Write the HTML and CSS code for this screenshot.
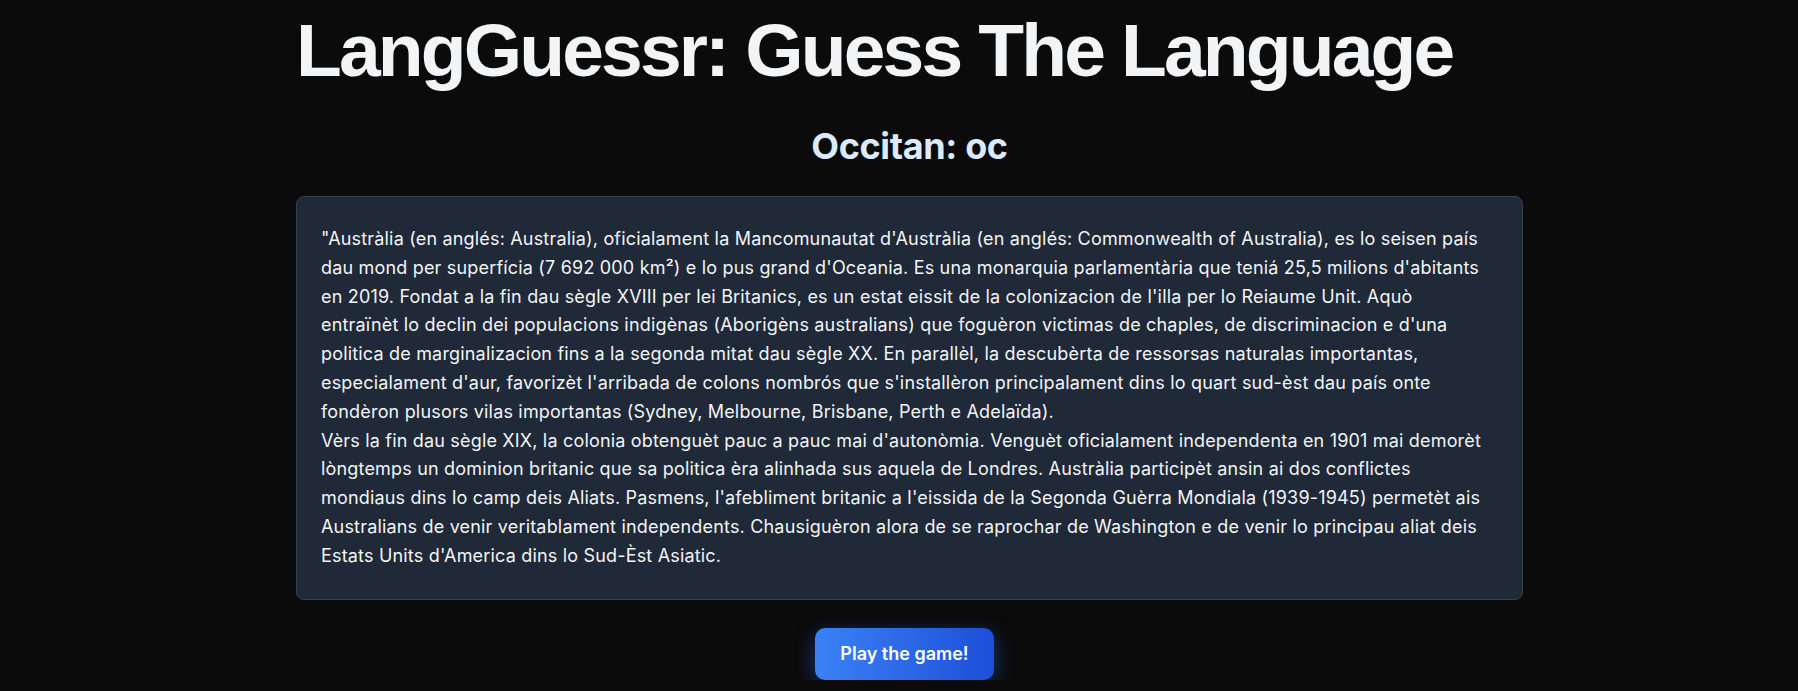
FILE: index.html
```html
<!DOCTYPE html>
<html lang="oc">
<head>
<meta charset="utf-8">
<title>LangGuessr</title>
<link rel="stylesheet" href="styles.css">
</head>
<body>
<main class="page">
  <h1 class="title">LangGuessr: Guess The Language</h1>
  <h2 class="lang">Occitan: oc</h2>
  <section class="card">
    <p class="text">"Austràlia (en anglés: Australia), oficialament la Mancomunautat d'Austràlia (en anglés: Commonwealth of Australia), es lo seisen país dau mond per superfícia (7 692 000 km²) e lo pus grand d'Oceania. Es una monarquia parlamentària que teniá 25,5 milions d'abitants en 2019. Fondat a la fin dau sègle XVIII per lei Britanics, es un estat eissit de la colonizacion de l'illa per lo Reiaume Unit. Aquò<br>entraïnèt lo declin dei populacions indigènas (Aborigèns australians) que foguèron victimas de chaples, de discriminacion e d'una<br>politica de marginalizacion fins a la segonda mitat dau sègle XX. En parallèl, la descubèrta de ressorsas naturalas importantas,<br>especialament d'aur, favorizèt l'arribada de colons nombrós que s'installèron principalament dins lo quart sud-èst dau país onte<br>fondèron plusors vilas importantas (Sydney, Melbourne, Brisbane, Perth e Adelaïda).<br>Vèrs la fin dau sègle XIX, la colonia obtenguèt pauc a pauc mai d'autonòmia. Venguèt oficialament independenta en 1901 mai demorèt lòngtemps un dominion britanic que sa politica èra alinhada sus aquela de Londres. Austràlia participèt ansin ai dos conflictes mondiaus dins lo camp deis Aliats. Pasmens, l'afebliment britanic a l'eissida de la Segonda Guèrra Mondiala (1939-1945) permetèt ais Australians de venir veritablament independents. Chausiguèron alora de se raprochar de Washington e de venir lo principau aliat deis Estats Units d'America dins lo Sud-Èst Asiatic.</p>
  </section>
  <div class="actions">
    <button class="play">Play the game!</button>
  </div>
</main>
</body>
</html>
```
FILE: styles.css
```css
html, body {
  margin: 0;
  padding: 0;
  background: #0b0b0c;
}
body {
  font-family: Inter, "Noto Sans", sans-serif;
  color: #f3f4f6;
}
.page {
  width: 1227px;
  margin-left: 296px;
  display: flex;
  flex-direction: column;
}
.title {
  margin: 0;
  padding-top: 10px;
  font-family: "Liberation Sans", Arial, sans-serif;
  font-weight: 700;
  font-size: 75px;
  line-height: 80px;
  letter-spacing: -0.038em;
  color: #f3f4f6;
}
.lang {
  margin: 36px 0 0;
  text-align: center;
  font-family: Inter, sans-serif;
  font-weight: 700;
  font-size: 36px;
  line-height: 40px;
  letter-spacing: -0.01em;
  color: #dbeafe;
}
.card {
  margin-top: 30px;
  background: #1f2937;
  border: 1px solid #374151;
  border-radius: 8px;
  padding: 28px 24px;
}
.text {
  margin: 0;
  font-size: 18px;
  line-height: 28.8px;
  letter-spacing: 0.18px;
  color: #f3f4f6;
}
.actions {
  display: flex;
  justify-content: center;
  margin-top: 28px;
  padding-right: 10px;
}
.play {
  width: 179px;
  height: 52px;
  border: none;
  border-radius: 10px;
  background: linear-gradient(90deg, #3b82f6, #1d4ed8);
  color: #fff;
  font-family: Inter, sans-serif;
  font-weight: 600;
  font-size: 18px;
  box-shadow: 0 6px 20px rgba(37, 99, 235, 0.45);
  cursor: pointer;
}
```
